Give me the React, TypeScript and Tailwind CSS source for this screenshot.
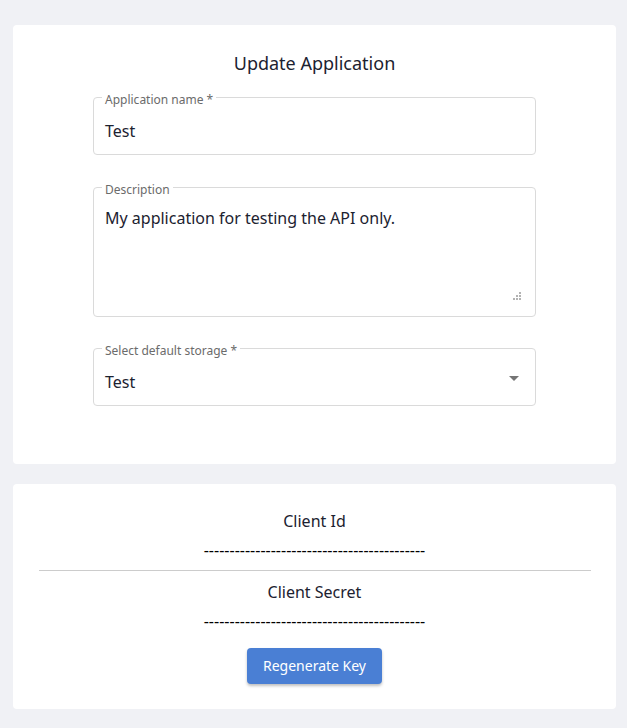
import React from "react";

const font = { fontFamily: '"Noto Sans", "Open Sans", sans-serif' };

const dashes = "-------------------------------------------";

function Grip() {
  const dots = [
    [6, 0],
    [3, 3],
    [6, 3],
    [0, 6],
    [3, 6],
    [6, 6],
  ];
  return (
    <svg width="8" height="8" viewBox="0 0 8 8" className="mb-[16px] mr-[14px] self-end">
      {dots.map(([x, y]) => (
        <rect key={`${x}-${y}`} x={x} y={y} width="2" height="2" fill="#b3b3b3" />
      ))}
    </svg>
  );
}

function Label({ children }: { children: React.ReactNode }) {
  return (
    <span className="absolute -top-[6px] left-[8px] bg-white px-[3px] text-[12px] leading-4 text-[#6b6b6b]">
      {children}
    </span>
  );
}

export default function App() {
  return (
    <div className="min-h-screen bg-[#f0f1f5] pb-[19px] pl-[13px] pr-[11px] pt-[25px]" style={font}>
      <div className="rounded bg-white pb-[58px] pt-[26px]">
        <h1 className="text-center text-[18px] leading-6 text-[#1c2230]">Update Application</h1>

        <div className="mx-[80px] mt-[22px] flex flex-col">
          <div className="relative h-[58px] rounded border border-[#dadada] pl-[11px] pt-[21px]">
            <Label>Application name *</Label>
            <div className="text-[16px] leading-6 text-[#1c2230]">Test</div>
          </div>

          <div className="relative mt-[32px] flex h-[130px] justify-between rounded border border-[#dadada] pl-[11px] pt-[18px]">
            <Label>Description</Label>
            <div className="text-[16px] leading-6 text-[#1c2230]">My application for testing the API only.</div>
            <Grip />
          </div>

          <div className="relative mt-[31px] flex h-[58px] items-start justify-between rounded border border-[#dadada] pl-[11px] pr-[9px] pt-[21px]">
            <Label>Select default storage *</Label>
            <div className="text-[16px] leading-6 text-[#1c2230]">Test</div>
            <svg width="24" height="24" viewBox="0 0 24 24" className="-mt-[4px]">
              <path d="M7 10l5 5 5-5z" fill="#757575" />
            </svg>
          </div>
        </div>
      </div>

      <div className="mt-[20px] flex flex-col items-center rounded bg-white pb-[25px] pt-[25px] text-[16px] leading-6 text-[#1c2230]">
        <div>Client Id</div>
        <div className="mt-[5px] text-black">{dashes}</div>
        <div className="mt-[8px] h-px w-[552px] bg-[#cccccc]" />
        <div className="mt-[9px]">Client Secret</div>
        <div className="mt-[5px] text-black">{dashes}</div>
        <button className="mt-[15px] h-[36px] w-[135px] rounded bg-[#4a7fd4] text-[14px] text-white shadow-[0_2px_3px_rgba(0,0,0,0.25)]">
          Regenerate Key
        </button>
      </div>
    </div>
  );
}
